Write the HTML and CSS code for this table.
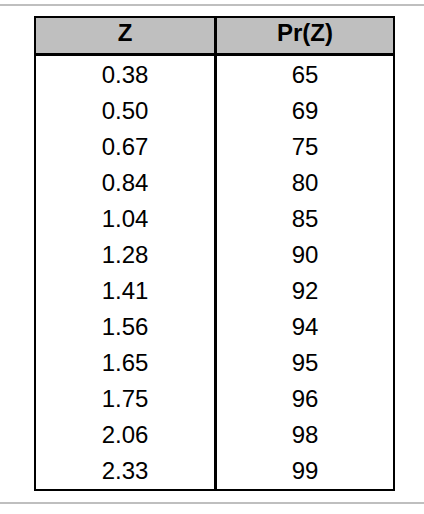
FILE: index.html
```html
<!DOCTYPE html>
<html lang="en">
<head>
<meta charset="utf-8">
<title>Z table</title>
<link rel="stylesheet" href="styles.css">
</head>
<body>
<div class="page">
  <div class="rule rule-top"></div>
  <div class="ztable">
    <div class="cell head left">Z</div>
    <div class="cell head">Pr(Z)</div>
    <div class="body-col left">
      <div class="cell">0.38</div>
      <div class="cell">0.50</div>
      <div class="cell">0.67</div>
      <div class="cell">0.84</div>
      <div class="cell">1.04</div>
      <div class="cell">1.28</div>
      <div class="cell">1.41</div>
      <div class="cell">1.56</div>
      <div class="cell">1.65</div>
      <div class="cell">1.75</div>
      <div class="cell">2.06</div>
      <div class="cell">2.33</div>
    </div>
    <div class="body-col">
      <div class="cell">65</div>
      <div class="cell">69</div>
      <div class="cell">75</div>
      <div class="cell">80</div>
      <div class="cell">85</div>
      <div class="cell">90</div>
      <div class="cell">92</div>
      <div class="cell">94</div>
      <div class="cell">95</div>
      <div class="cell">96</div>
      <div class="cell">98</div>
      <div class="cell">99</div>
    </div>
  </div>
  <div class="rule rule-bottom"></div>
</div>
</body>
</html>
```

FILE: styles.css
```css
html, body {
  margin: 0;
  padding: 0;
  background: #ffffff;
}

.page {
  display: flex;
  flex-direction: column;
  width: 424px;
  font-family: "Liberation Sans", Arial, sans-serif;
  color: #000;
}

.rule {
  height: 2px;
  background: #bfbfbf;
}

.rule-top {
  margin-top: 4px;
}

.ztable {
  margin: 10px 0 0 34px;
  width: 361px;
  box-sizing: border-box;
  border: 2px solid #000;
  display: grid;
  grid-template-columns: 181px 176px;
}

.cell {
  text-align: center;
  font-size: 24px;
  height: 36px;
  box-sizing: border-box;
  padding-top: 2px;
  line-height: 34px;
}

.cell.head {
  background: #bfbfbf;
  font-weight: bold;
  height: 38px;
  padding-top: 0;
  line-height: 29px;
  padding-bottom: 3px;
  border-bottom: 3px solid #000;
}

.left {
  border-right: 3px solid #000;
}

.body-col {
  display: flex;
  flex-direction: column;
  padding-bottom: 1px;
}

.rule-bottom {
  margin-top: 11px;
}
```
